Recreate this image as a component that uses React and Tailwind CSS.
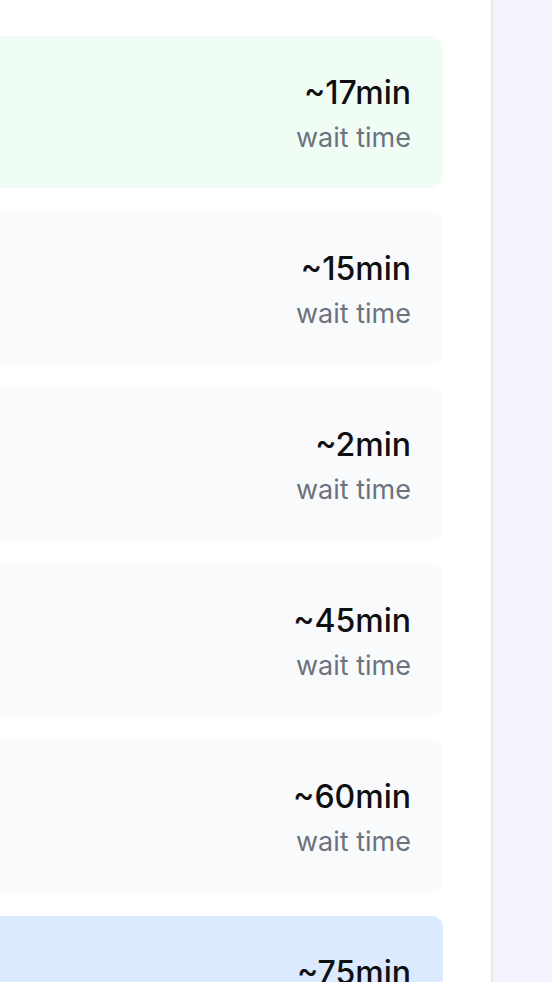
import React from "react";

const queues = [
  { wait: "~17min", tone: "bg-[#f0fdf4]" },
  { wait: "~15min", tone: "bg-[#f9fafb]" },
  { wait: "~2min", tone: "bg-[#f9fafb]" },
  { wait: "~45min", tone: "bg-[#f9fafb]" },
  { wait: "~60min", tone: "bg-[#f9fafb]" },
  { wait: "~75min", tone: "bg-[#dbeafe]" },
];

export default function App() {
  return (
    <div
      className="flex h-[982px] w-[552px] overflow-hidden bg-[#f4f2fd]"
      style={{ fontFamily: "Inter, 'Noto Sans', sans-serif" }}
    >
      <div className="flex w-[493px] shrink-0 flex-col gap-6 border-r-2 border-[#e8e8ec] bg-white pt-9 pr-12">
        {queues.map((q) => (
          <div
            key={q.wait}
            className={`flex h-[152px] shrink-0 flex-col items-end justify-center rounded-r-xl pr-8 pt-[5px] ${q.tone}`}
          >
            <span className="text-[32px] leading-[38px] font-medium text-[#0f0f12]">{q.wait}</span>
            <span className="mt-2 text-[27px] leading-[36px] text-[#6b7280]">wait time</span>
          </div>
        ))}
      </div>
      <div className="flex-1" />
    </div>
  );
}
